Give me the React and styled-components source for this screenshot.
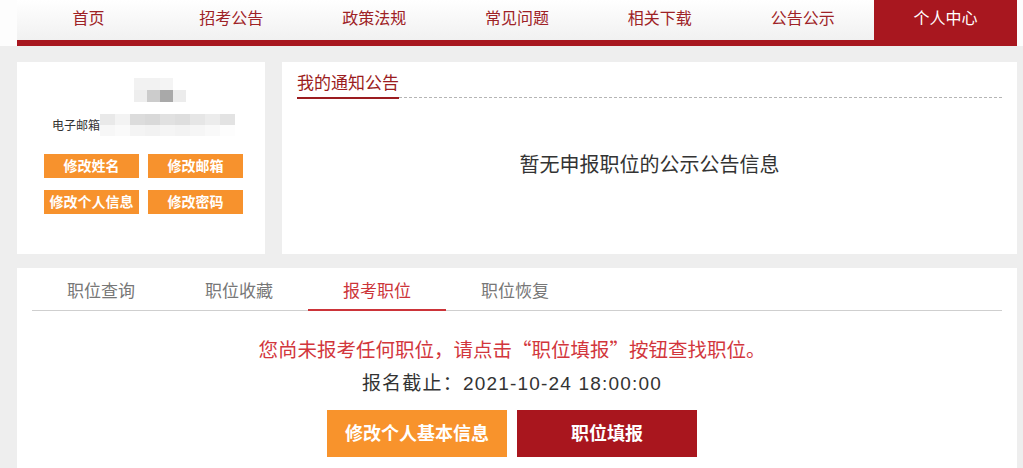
import React from 'react'
import styled, { createGlobalStyle } from 'styled-components'

const GlobalStyle = createGlobalStyle`
  html, body {
    margin: 0;
    padding: 0;
    background: #eeeeee;
    font-family: "Noto Sans", "Noto Sans CJK SC", sans-serif;
  }
`

const Header = styled.div`
  background: #fdfdfd;
  padding-left: 17px;
`

const Nav = styled.ul`
  display: flex;
  width: 1000px;
  margin: 0;
  padding: 0;
  list-style: none;
  border-bottom: 6px solid #a8171f;
  background: linear-gradient(#ffffff, #f1f1f1);
`

const NavItem = styled.li`
  flex: 1;
  height: 40px;
  line-height: 36px;
  text-align: center;
  font-size: 16px;
  color: ${p => (p.$active ? '#fff' : '#9e2226')};
  background: ${p => (p.$active ? '#a8171f' : 'transparent')};
`

const Main = styled.div`
  width: 1000px;
  margin-left: 17px;
  padding-top: 16px;
`

const TopRow = styled.div`
  display: flex;
  gap: 17px;
  height: 192px;
`

const Card = styled.div`
  background: #fff;
`

const UserCard = styled(Card)`
  width: 248px;
  display: flex;
  flex-direction: column;
  padding: 16px 0 0 27px;
  box-sizing: border-box;
`

const Blur = styled.div`
  display: grid;
  grid-template-columns: repeat(${p => p.$cols}, ${p => p.$w}px);
  grid-auto-rows: ${p => p.$h}px;
`

const Cell = styled.div`
  background: ${p => p.$c};
`

const NameBlur = styled(Blur)`
  margin-left: 90px;
`

const EmailRow = styled.div`
  display: flex;
  align-items: center;
  margin: 12px 0 0 8px;
  font-size: 12px;
  color: #333;
`

const ButtonGrid = styled.div`
  display: grid;
  grid-template-columns: 95px 95px;
  grid-auto-rows: 24px;
  column-gap: 9px;
  row-gap: 12px;
  margin-top: 18px;
`

const SmallButton = styled.div`
  background: #f7922d;
  color: #fff;
  font-size: 14px;
  font-weight: bold;
  line-height: 24px;
  text-align: center;
`

const NoticeCard = styled(Card)`
  flex: 1;
  padding: 0 15px;
  display: flex;
  flex-direction: column;
`

const NoticeHead = styled.div`
  display: flex;
  align-items: flex-end;
  margin-top: 9px;
`

const NoticeTitle = styled.div`
  font-size: 17px;
  line-height: 24px;
  color: #9b1c20;
  padding-bottom: 2px;
  border-bottom: 2px solid #9b1c20;
`

const Dashed = styled.div`
  flex: 1;
  border-bottom: 1px dashed #b5b5b5;
  margin-bottom: 1px;
`

const Empty = styled.div`
  text-align: center;
  font-size: 20px;
  color: #333;
  margin-top: 50px;
`

const ApplyCard = styled(Card)`
  margin-top: 14px;
  padding: 0 15px 11px;
  height: 200px;
`

const Tabs = styled.div`
  display: flex;
  border-bottom: 1px solid #cfcfcf;
`

const Tab = styled.div`
  width: 138px;
  text-align: center;
  font-size: 17px;
  line-height: 22px;
  padding: 12px 0 7px;
  margin-bottom: -1px;
  color: ${p => (p.$active ? '#cc3439' : '#777')};
  border-bottom: 2px solid ${p => (p.$active ? '#cc3439' : 'transparent')};
`

const Body = styled.div`
  display: flex;
  flex-direction: column;
  align-items: center;
  padding-right: 10px;
`

const Warn = styled.div`
  margin-top: 24px;
  font-family: "Noto Sans CJK SC", sans-serif;
  font-size: 19.5px;
  line-height: 28px;
  color: #d2363c;
`

const Deadline = styled.div`
  margin-top: 7px;
  font-family: "Liberation Sans", "Noto Sans CJK SC", sans-serif;
  font-size: 19px;
  letter-spacing: 1.2px;
  line-height: 28px;
  color: #333;
`

const Actions = styled.div`
  display: flex;
  gap: 10px;
  margin-top: 12px;
`

const BigButton = styled.div`
  width: 180px;
  height: 47px;
  line-height: 47px;
  text-align: center;
  font-size: 18px;
  font-weight: bold;
  color: #fff;
  background: ${p => (p.$tone === 'red' ? '#a9161e' : '#f8932c')};
`

const navs = ['首页', '招考公告', '政策法规', '常见问题', '相关下载', '公告公示', '个人中心']

const nameCells = [
  '#f2f2f2', '#f2f2f2', '#f4f4f4', '#fff',
  '#eeeeee', '#cccccc', '#a9a9a9', '#ececec',
]

const emailCells = [
  '#e9e9e9', '#f3f3f3', '#dcdcdc', '#d9d9d9', '#e1e1e1', '#dedede', '#e6e6e6', '#ececec', '#e3e3e3',
  '#f7f7f7', '#fafafa', '#f4f4f4', '#f2f2f2', '#f5f5f5', '#f3f3f3', '#f6f6f6', '#f9f9f9', '#fdfdfd',
]

export default function App() {
  return (
    <>
      <GlobalStyle />
      <Header>
        <Nav>
          {navs.map(n => (
            <NavItem key={n} $active={n === '个人中心'}>{n}</NavItem>
          ))}
        </Nav>
      </Header>

      <Main>
        <TopRow>
          <UserCard>
            <NameBlur $cols={4} $w={13} $h={12}>
              {nameCells.map((c, i) => <Cell key={i} $c={c} />)}
            </NameBlur>
            <EmailRow>
              <span>电子邮箱</span>
              <Blur $cols={9} $w={15} $h={11}>
                {emailCells.map((c, i) => <Cell key={i} $c={c} />)}
              </Blur>
            </EmailRow>
            <ButtonGrid>
              <SmallButton>修改姓名</SmallButton>
              <SmallButton>修改邮箱</SmallButton>
              <SmallButton>修改个人信息</SmallButton>
              <SmallButton>修改密码</SmallButton>
            </ButtonGrid>
          </UserCard>

          <NoticeCard>
            <NoticeHead>
              <NoticeTitle>我的通知公告</NoticeTitle>
              <Dashed />
            </NoticeHead>
            <Empty>暂无申报职位的公示公告信息</Empty>
          </NoticeCard>
        </TopRow>

        <ApplyCard>
          <Tabs>
            <Tab>职位查询</Tab>
            <Tab>职位收藏</Tab>
            <Tab $active>报考职位</Tab>
            <Tab>职位恢复</Tab>
          </Tabs>
          <Body>
            <Warn>您尚未报考任何职位，请点击“职位填报”按钮查找职位。</Warn>
            <Deadline>报名截止：2021-10-24 18:00:00</Deadline>
            <Actions>
              <BigButton>修改个人基本信息</BigButton>
              <BigButton $tone="red">职位填报</BigButton>
            </Actions>
          </Body>
        </ApplyCard>
      </Main>
    </>
  )
}
